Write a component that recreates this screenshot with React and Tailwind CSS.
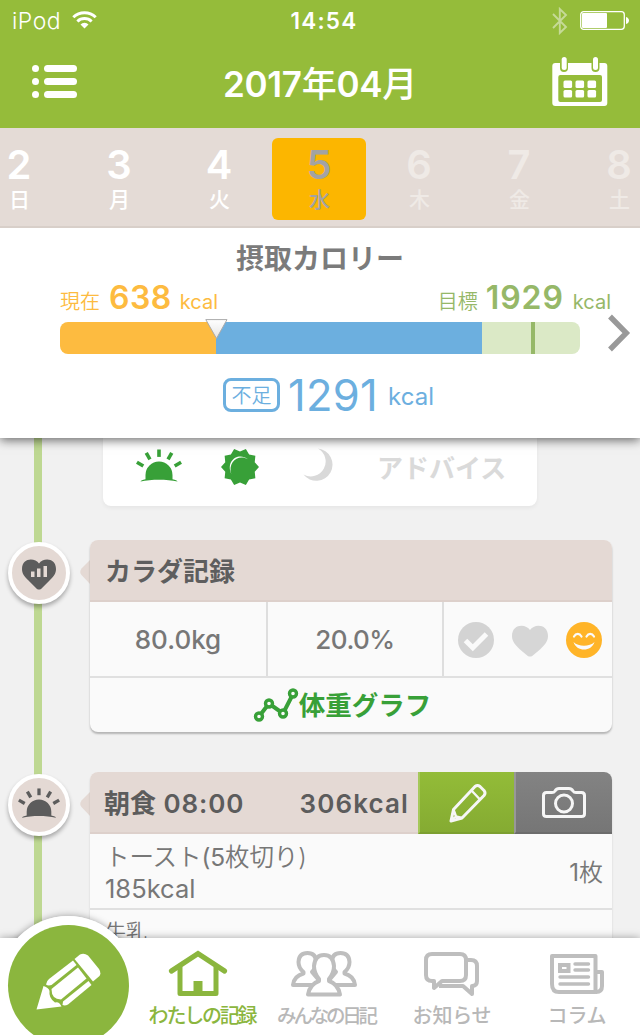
import React from 'react'

const days = [
  { num: '2', name: '日', style: 'text-white' },
  { num: '3', name: '月', style: 'text-white' },
  { num: '4', name: '火', style: 'text-white' },
  { num: '5', name: '水', style: 'text-[#a3a3a3] bg-[#fcb600]' },
  { num: '6', name: '木', style: 'text-[#efeae6]' },
  { num: '7', name: '金', style: 'text-[#efeae6]' },
  { num: '8', name: '土', style: 'text-[#efeae6]' },
]

// ten-pointed star used for the daytime icon
const starPoints = Array.from({ length: 20 }, (_, i) => {
  const r = i % 2 === 0 ? 19 : 15.5
  const a = (i * 18 * Math.PI) / 180
  return `${(19 + r * Math.cos(a)).toFixed(2)},${(19 + r * Math.sin(a)).toFixed(2)}`
}).join(' ')

function Sunrise({ className }) {
  return (
    <svg viewBox="0 0 46 34" className={className} fill="currentColor">
      <path d="M9.5 26a13.5 13.5 0 0 1 27 0v4.2c3 .5 5 1.400 5 2.300-11-2.500-26-2.500-37 0 0-.9 2-1.800 5-2.300z" />
      {[-60, -30, 0, 30, 60].map((deg) => (
        <rect key={deg} x="21.200" y="0.500" width="3.600" height="7.400" transform={`rotate(${deg} 23 26)`} />
      ))}
    </svg>
  )
}

function StatusBar() {
  return (
    <div className="grid h-10 grid-cols-3 items-center pl-3 pr-3 text-white">
      <div className="flex items-center gap-[11px]">
        <span className="pt-px text-[23px] leading-10 font-light tracking-[0.500px]">iPod</span>
        <svg width="25" height="18" viewBox="0 0 25 18" className="-mt-px" fill="none" stroke="white" strokeWidth="3">
          <path d="M1.300 6.200a16 16 0 0 1 22.400 0M5.400 10.500a10.200 10.200 0 0 1 14.200 0" />
          <path d="M12.500 17.500L8.500 13.400a5.800 5.800 0 0 1 8 0z" fill="white" stroke="none" />
        </svg>
      </div>
      <span className="pl-2 pt-px text-center text-[22.500px] leading-10 font-semibold tracking-[1.200px]">14:54</span>
      <div className="flex items-center justify-end gap-3">
        <svg width="16" height="28" viewBox="0 0 16 28" fill="none" stroke="#c6da97" strokeWidth="1.900">
          <path d="M1 7l13 13-6.200 6V2L14 8 1 21" />
        </svg>
        <svg width="49" height="19" viewBox="0 0 49 19" className="-mr-px">
          <rect x="0.700" y="0.700" width="43.600" height="17.600" rx="3" fill="none" stroke="white" strokeWidth="1.300" />
          <rect x="2" y="2" width="25" height="15" rx="1" fill="white" />
          <path d="M46 6c4 1 4 6 0 7z" fill="white" />
        </svg>
      </div>
    </div>
  )
}

function Header() {
  return (
    <header className="h-32 shrink-0 bg-[#95bc3a]">
      <StatusBar />
      <div className="flex h-[88px] items-start justify-between pl-8 pr-8 text-white">
        <svg width="46" height="34" viewBox="0 0 46 34" className="mt-[25px] mr-[10px]" fill="white">
          {[0, 13, 26].map((y) => (
            <g key={y}>
              <circle cx="3.500" cy={y + 3.500} r="3.500" />
              <rect x="12" y={y} width="33" height="7" rx="3.500" />
            </g>
          ))}
        </svg>
        <h1 className="mt-[19px] text-[35px] leading-[50px] font-semibold tracking-[-0.300px]">
          2017<span className="font-medium">年</span>04<span className="font-medium">月</span>
        </h1>
        <svg width="56" height="50" viewBox="0 0 56 50" className="mt-[17px]">
          <rect x="0.300" y="6" width="55" height="43" rx="3" fill="white" />
          <rect x="6.300" y="18" width="43.700" height="27" rx="2" fill="#95bc3a" />
          <path d="M8 4h8v7a4 4 0 0 1-8 0zM39.500 4h8v7a4 4 0 0 1-8 0z" fill="#95bc3a" />
          <rect x="9.700" y="0" width="5" height="13" rx="2.500" fill="white" />
          <rect x="41" y="0" width="5" height="13" rx="2.500" fill="white" />
          {[11.5, 23.5, 35.5].map((x) => (
            <g key={x} fill="white">
              <rect x={x} y="23.500" width="8.600" height="7.500" rx="1.500" />
              <rect x={x} y="33" width="8.600" height="7.500" rx="1.500" />
            </g>
          ))}
        </svg>
      </div>
    </header>
  )
}

function DayStrip() {
  return (
    <div className="relative z-20 h-[100px] shrink-0 border-b-2 border-[#d8cfc9] bg-[#e4dbd6]">
      <div className="-ml-[28px] flex w-[700px] gap-[6px] pt-[10px]">
        {days.map((d) => (
          <div key={d.num} className={`h-[82px] w-[94px] shrink-0 rounded-md text-center ${d.style}`}>
            <div className="pt-[7px] text-[40px] leading-10 font-semibold">{d.num}</div>
            <div className="pl-px pt-px text-[21px] leading-[28px] font-medium">{d.name}</div>
          </div>
        ))}
      </div>
    </div>
  )
}

function CaloriePanel() {
  return (
    <section className="relative z-10 h-[210px] shrink-0 bg-white shadow-[0_2px_10px_rgba(0,0,0,0.6)]">
      <h2 className="pt-[10px] text-center text-[28px] leading-[42px] font-bold text-[#7b7b7b]">摂取カロリー</h2>
      <div className="flex h-[42px] items-baseline justify-between pl-[60px] pr-[29px] leading-[36px]">
        <div className="flex items-baseline text-[#fdbb40]">
          <span className="text-[20px] font-[350]">現在</span>
          <span className="ml-[9px] text-[32px] font-semibold tracking-[0.500px]">638</span>
          <span className="ml-[8px] text-[20px] font-normal">kcal</span>
        </div>
        <div className="flex items-baseline text-[#96b868]">
          <span className="text-[20px] font-[350]">目標</span>
          <span className="ml-[8px] text-[32px] font-semibold tracking-[0.900px]">1929</span>
          <span className="ml-[9px] text-[20px] font-normal">kcal</span>
        </div>
      </div>
      <div className="flex h-8 items-start pl-[60px]">
        <div className="relative flex h-8 w-[520px]">
          <div className="w-[156px] rounded-l-lg bg-[#fdbb40]"></div>
          <div className="w-[266px] bg-[#6cafdf]"></div>
          <div className="w-[98px] rounded-r-lg bg-[#dbe9c6] pl-[49px]">
            <div className="h-8 w-1 bg-[#96b868]"></div>
          </div>
          <svg width="23" height="21" viewBox="0 0 23 21" className="absolute -top-[3px] left-[145px]">
            <defs>
              <linearGradient id="pointer" x1="0" y1="0" x2="0" y2="1">
                <stop offset="0" stopColor="#fff" />
                <stop offset="1" stopColor="#e4e4e4" />
              </linearGradient>
            </defs>
            <path d="M0.800 0.600h21.200L11.500 19.500z" fill="url(#pointer)" stroke="#aaa" strokeLinejoin="round" />
          </svg>
        </div>
        <svg width="24" height="38" viewBox="0 0 24 38" className="-mt-[8px] ml-[27px]" fill="none" stroke="#999" strokeWidth="5.400">
          <path d="M3 2.500L19.300 19 3 35.500" />
        </svg>
      </div>
      <div className="flex items-start pl-[223px] pt-6 text-[#6cafdf]">
        <span className="h-[34px] w-[57px] rounded-lg border-[3.500px] border-[#6cafdf] pt-px text-center text-[20px] leading-[28px] font-[350]">不足</span>
        <span className="-mt-[5px] ml-[8px] text-[43.500px] leading-[44px] font-normal tracking-[0.300px]">1291</span>
        <span className="ml-[10px] text-[24px] leading-[38px] font-normal">kcal</span>
      </div>
    </section>
  )
}

function AdviceCard() {
  return (
    <div className="relative ml-[103px] flex h-[68px] w-[434px] items-start rounded-b-lg bg-white pl-[33px] shadow-[0_2px_4px_rgba(0,0,0,0.05)]">
      <Sunrise className="mt-[11px] h-[34px] w-[46px] text-[#38a038]" />
      <svg width="38" height="38" viewBox="0 0 38 38" className="mt-[10px] ml-[39px]">
        <polygon points={starPoints} fill="#38a038" />
        <path d="M10.300 26C4.500 13 17 3.800 27 11.300 17.600 5.600 6.400 14 10.300 26z" fill="#fff" />
      </svg>
      <svg width="30" height="34" viewBox="0 0 30 34" className="mt-[10px] ml-[44px]">
        <path d="M15 0.500A16.200 16.200 0 1 1 0.500 26.500 13.900 13.900 0 0 0 15 0.500z" fill="#d9d9d9" />
      </svg>
      <span className="ml-[44px] pt-[2px] text-[26px] leading-[58px] font-bold text-[#dadada]">アドバイス</span>
    </div>
  )
}

function TimelineItem({ icon, children }) {
  return (
    <div className="relative flex items-start pl-2">
      <div className="mt-[2px] flex h-[62px] w-[62px] shrink-0 items-center justify-center rounded-full border-4 border-white bg-[#e4d9d4] text-[#5c5c5c] shadow-[0_3px_4px_rgba(0,0,0,0.3)]">
        {icon}
      </div>
      <svg width="10" height="26" viewBox="0 0 10 26" className="mt-[19px] ml-[10px] shrink-0">
        <path d="M10 1L1.500 9.500Q-1 13 1.500 16L10 25z" fill="#e4d9d4" />
      </svg>
      {children}
    </div>
  )
}

function BodyCard() {
  return (
    <div className="w-[522px] overflow-hidden rounded-lg bg-[#fafafa] text-[#777] shadow-[0_2px_2px_rgba(0,0,0,0.25)]">
      <h3 className="h-[62px] border-b-2 border-[#ddd0cb] bg-[#e4d9d4] pl-[15px] pt-px text-[26px] leading-[62px] font-bold text-[#5e5e5e]">カラダ記録</h3>
      <div className="flex h-[76px] border-b-2 border-[#e0e0e0] text-center text-[26px] leading-[76px] font-medium">
        <div className="w-[178px] border-r-2 border-[#dedede]">80.0kg</div>
        <div className="w-[176px] border-r-2 border-[#dedede] tracking-[-0.500px]">20.0%</div>
        <div className="flex w-[168px] items-center justify-between pl-[14px] pr-[10px] pt-[2px]">
          <svg width="36" height="36" viewBox="0 0 36 36">
            <circle cx="18" cy="18" r="18" fill="#d3d3d3" />
            <path d="M7.500 18.500l7.300 7.300L28.500 12" fill="none" stroke="#fafafa" strokeWidth="5" />
          </svg>
          <svg width="36" height="32" viewBox="0 0 36 32" className="mt-[2px]">
            <path d="M18 5C22-1.500 36-1.500 36 11c0 6-4 9.500-8 13.500l-7.500 6.200q-2.500 1.800-5 0L8 24.500C4 20.500 0 17 0 11-0-1.500 14-1.500 18 5z" fill="#d6d6d6" />
          </svg>
          <svg width="36" height="36" viewBox="0 0 36 36" fill="none" stroke="#fafafa">
            <circle cx="18" cy="18" r="18" fill="#ffb428" stroke="none" />
            <path d="M8 14.500c2-3.500 5.500-3.500 7.500 0M20.500 14.500c2-3.500 5.500-3.500 7.500 0" strokeWidth="2.200" strokeLinecap="round" />
            <path d="M7.500 20c5 5 16 5 21 0-3 10-18 10-21 0z" fill="#fafafa" stroke="none" />
          </svg>
        </div>
      </div>
      <div className="flex h-[54px] items-start justify-center pr-[18px] text-[#38a038]">
        <svg width="46" height="34" viewBox="0 0 46 34" className="mt-[10px]" fill="#fafafa" stroke="currentColor" strokeWidth="3.400">
          <path d="M6 28.500L16 15.500 30 25.500 40 6" fill="none" strokeWidth="4" />
          <circle cx="6" cy="28.500" r="3.500" />
          <circle cx="16" cy="15.500" r="3.500" />
          <circle cx="30" cy="25.500" r="3.500" />
          <circle cx="40" cy="5.500" r="3.500" />
        </svg>
        <span className="text-[26.500px] leading-[54px] font-bold">体重グラフ</span>
      </div>
    </div>
  )
}

function MealCard() {
  return (
    <div className="w-[522px] overflow-hidden rounded-lg bg-[#fafafa] text-[#777] shadow-[0_2px_2px_rgba(0,0,0,0.15)]">
      <div className="flex h-[62px] text-[26px] leading-[64px] font-semibold text-[#5c5c5c]">
        <div className="flex w-[328px] justify-between border-b-2 border-[#ddd0cb] bg-[#e4d9d4] pl-[14px] pr-[9px]">
          <span className="tracking-[0.900px]"><span className="font-bold tracking-normal">朝食</span> 08:00</span>
          <span className="tracking-[1.100px]">306kcal</span>
        </div>
        <button className="flex w-24 items-center justify-center border-b-2 border-l-2 border-b-[#7c9f30] border-l-[#a5c85a] bg-linear-to-b from-[#93bc38] to-[#85ab32]">
          <svg width="38" height="40" viewBox="0 0 38 40" className="mt-px ml-[2px]" fill="none" stroke="#f6f6f6" strokeWidth="3" strokeLinejoin="round">
            <path d="M2 38L4.500 26.500 26 3.500Q28.500 1.500 31 3.500L35 7.500Q37 10 35 12.500L13 35z" />
            <path d="M22.500 7.500l8.500 9M4.500 26.500l2.500 7 6 1.500M2 38l4-4" strokeWidth="2.400" />
          </svg>
        </button>
        <button className="flex w-[98px] items-center justify-center border-b-2 border-l-2 border-b-[#6c6c6c] border-l-[#989898] bg-linear-to-b from-[#838383] to-[#767676]">
          <svg width="44" height="32" viewBox="0 0 44 32" className="mt-[2px]" fill="none" stroke="#f6f6f6" strokeWidth="3" strokeLinejoin="round">
            <path d="M4.500 5.500H10Q12 5.500 13 4Q14.500 1.500 17 1.500H27Q29.500 1.500 31 4Q32 5.500 34 5.500H39.500Q42.500 5.500 42.500 8.500V27Q42.500 29.500 39.500 29.500H4.500Q1.500 29.500 1.500 27V8.500Q1.500 5.500 4.500 5.500z" />
            <circle cx="22" cy="16.500" r="8.500" />
          </svg>
        </button>
      </div>
      <div className="flex h-[76px] items-center justify-between border-b-2 border-[#e0e0e0] pl-[15px] pr-[9px] pt-[3px]">
        <div className="text-[25.500px] leading-[32px]">
          <div className="text-[24.500px] font-[350] tracking-[-0.100px]">トースト<span className="font-normal">(5</span>枚切り)</div>
          <div>185kcal</div>
        </div>
        <div className="text-[24px] font-[350]"><span className="font-normal">1</span>枚</div>
      </div>
      <div className="pl-[15px] pt-[6px] text-[21px] leading-[32px] font-[350]">牛乳</div>
    </div>
  )
}

function HeartChart() {
  return (
    <svg width="34" height="31" viewBox="0 0 34 31" className="mt-[3px]">
      <path d="M17 4.500C21-1.500 34-1.500 34 10c0 5-2.500 7.500-6 11l-9 9q-2 1.200-4 0L6 21C2.500 17.500 0 15 0 10 0-1.500 13-1.500 17 4.500z" fill="#5c5c5c" />
      <path d="M9 12.500h3.500V18H9zM15 9.500h3.500V18H15zM21.500 7H25v11h-3.500z" fill="#e4d9d4" />
    </svg>
  )
}

function Tab({ label, className, children }) {
  return (
    <a href="#" className={`flex shrink-0 flex-col items-center whitespace-nowrap ${className}`}>
      <div className="h-[64px] pt-3">{children}</div>
      <span className="leading-[28px]">{label}</span>
    </a>
  )
}

function TabBar() {
  return (
    <nav className="relative z-10 flex h-[97px] shrink-0 bg-white pl-[139px] font-medium text-[#b8b8b8] shadow-[0_0_8px_rgba(0,0,0,0.35)]">
      {/* record button sticks out of the top of the bar */}
      <div className="absolute -top-[22px] left-0 h-[119px] w-[140px] overflow-hidden">
        <div className="-ml-[1px] flex h-[138px] w-[138px] items-center justify-center rounded-full bg-white">
          <div className="flex h-[121px] w-[121px] items-center justify-center rounded-full bg-[#8bb63e]">
            <svg width="66" height="57" viewBox="0 0 66 57" className="-mt-[8px]" fill="white">
              <path d="M1.500 56.500L8.500 33Q14 35 14.500 38 13.500 45 20 49.500 24 48 26.500 53.500z" />
              <path d="M11 31.500Q11.500 28 14 26L38 7.500l3.500 4.500-25 20Q13 33 11 31.500z" />
              <path d="M16.500 36L43 14.500l8.500 11L26 46.500Q16.500 46.500 16.500 36z" />
              <path d="M28 48.500L53.500 28l3 4L33 51.500Q30 53 27.500 52z" />
              <path d="M39.500 6L45 1.500Q49-.5 53 2.500L64 16Q66.500 20 64.500 23L58 28.500z" />
            </svg>
          </div>
        </div>
      </div>
      <Tab label="わたしの記録" className="w-[126px] text-[20px] tracking-[-2.200px] text-[#8bb63e]">
        <svg width="60" height="46" viewBox="0 0 60 46" className="-ml-[8px]" fill="none" stroke="currentColor">
          <path d="M3.500 21L30 3.500 56.500 21" strokeWidth="5.200" strokeLinecap="round" />
          <path d="M12 17v26.500h36V17" strokeWidth="5" strokeLinejoin="round" />
          <path d="M25.500 31h9v12h-9z" fill="currentColor" stroke="none" />
        </svg>
      </Tab>
      <Tab label="みんなの日記" className="w-[122px] text-[19.500px] tracking-[-3.200px]">
        <svg width="68" height="48" viewBox="0 0 68 48" className="-ml-[4px]" fill="white" stroke="#bebebe" strokeWidth="4" strokeLinejoin="round">
          <path d="M13.500 22Q8.500 18 8.500 12 9 3 17.500 3T26 12Q26 18 22 22L33 35H3Q4 26 13.500 23.500z" />
          <path d="M54.500 22Q59.500 18 59.500 12 59 3 50.500 3T42 12Q42 18 46 22L35 35H65Q64 26 54.500 23.500z" />
          <path d="M29 29Q24 23 24 16 25 5 34 5T44 16Q44 23 39 29v2Q48 34 50 44.500H18Q20 34 29 31z" />
        </svg>
      </Tab>
      <Tab label="お知らせ" className="w-[130px] text-[20px] tracking-[-0.200px]">
        <svg width="56" height="46" viewBox="0 0 56 46" className="mt-px" fill="none" stroke="#bebebe" strokeWidth="4" strokeLinejoin="round">
          <path d="M8 3h28q6 0 6 6v15q0 6-6 6H18l-8 7V30H8q-6 0-6-6V9q0-6 6-6z" />
          <path d="M43 9h4q6 0 6 6v15q0 5-5 5v8l-9-8H15" />
        </svg>
      </Tab>
      <Tab label="コラム" className="w-[120px] text-[20px] tracking-[-0.200px]">
        <svg width="54" height="42" viewBox="0 0 54 42" className="mt-[3px]" fill="none" stroke="#bebebe" strokeWidth="4">
          <path d="M2 3h43.500v36H9q-7 0-7-8z" strokeLinejoin="round" />
          <path d="M45.500 19H52v14q0 6-6 6" strokeLinejoin="round" />
          <path d="M10 12h8.500v6H10z" />
          <path d="M25 11h13.500M25 17h13.500M10 24h28.500M10 31h28.500" strokeWidth="3.400" strokeLinecap="round" />
        </svg>
      </Tab>
    </nav>
  )
}

export default function App() {
  return (
    <div className="flex h-[1035px] w-[640px] flex-col overflow-hidden bg-[#f1f1f1] font-[Inter,'Noto_Sans_CJK_JP',sans-serif]">
      <Header />
      <DayStrip />
      <CaloriePanel />
      <main className="relative h-[500px] shrink-0 overflow-hidden">
        <div className="absolute top-0 left-[34px] h-full w-2 bg-[#bed892]"></div>
        <AdviceCard />
        <div className="flex flex-col gap-10 pt-[34px]">
          <TimelineItem icon={<HeartChart />}>
            <BodyCard />
          </TimelineItem>
          <TimelineItem icon={<Sunrise className="-mt-[3px] h-[31px] w-[42px] shrink-0" />}>
            <MealCard />
          </TimelineItem>
        </div>
        {/* soft shadow behind the record button */}
        <div className="absolute top-[478px] -left-px h-[138px] w-[138px] rounded-full shadow-[0_0_7px_rgba(0,0,0,0.35)]"></div>
      </main>
      <TabBar />
    </div>
  )
}
